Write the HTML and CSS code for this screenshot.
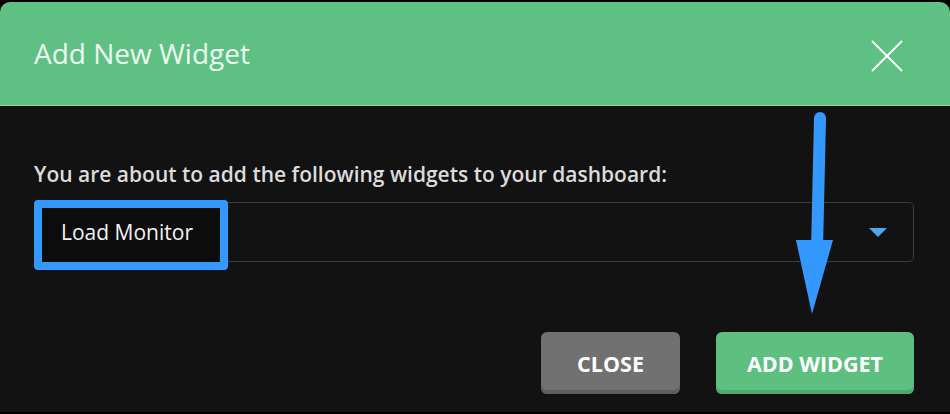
FILE: index.html
```html
<!DOCTYPE html>
<html lang="en">
<head>
    <meta charset="UTF-8">
    <meta name="viewport" content="width=device-width, initial-scale=1.0">
    <title>Add New Widget</title>
    <link rel="stylesheet" href="styles.css">
</head>
<body>
    <div class="modal">
        <div class="modal-header">
            <h2>Add New Widget</h2>
            <button class="close-x" aria-label="Close">
                <svg width="32" height="32" viewBox="0 0 32 32">
                    <path d="M1 1 L31 31 M31 1 L1 31" stroke="#ffffff" stroke-width="2" fill="none"/>
                </svg>
            </button>
        </div>
        <div class="modal-body">
            <p class="label">You are about to add the following widgets to your dashboard:</p>
            <div class="select">
                <span class="select-value">Load Monitor</span>
                <span class="caret"></span>
            </div>
            <div class="actions">
                <button class="btn btn-close">CLOSE</button>
                <button class="btn btn-add">ADD WIDGET</button>
            </div>
        </div>

        <!-- annotation overlays -->
        <div class="highlight"></div>
        <svg class="arrow" width="60" height="210" viewBox="0 0 60 210">
            <path d="M37 8 L34 140" stroke="#3399ff" stroke-width="12" stroke-linecap="round" fill="none"/>
            <polygon points="13,130 50,130 29,204" fill="#3399ff"/>
        </svg>
    </div>
</body>
</html>
```

FILE: styles.css
```css
body {
    margin: 0;
    padding: 0;
    background: #000;
    font-family: "Open Sans", Arial, sans-serif;
    height: 414px;
    overflow: hidden;
}
.modal {
    position: relative;
    margin-top: 2px;
    background: #121212;
    border-radius: 10px 10px 0 0;
    overflow: hidden;
    height: 410px;
}
.modal-header {
    display: flex;
    align-items: center;
    justify-content: space-between;
    height: 103px;
    padding: 0 47px 0 34px;
    background: #5fc084;
    border-bottom: 1px solid #8fd6a8;
}
.modal-header h2 {
    margin: 0 0 2px 0;
    font-size: 28px;
    font-weight: 400;
    color: #eefaf1;
}
.close-x {
    background: none;
    border: none;
    padding: 0;
    margin-top: 4px;
    cursor: pointer;
    display: flex;
}
.modal-body {
    padding: 54px 36px 0 34px;
}
.label {
    margin: 0 0 14px 0;
    font-size: 21px;
    font-weight: 600;
    color: #dcdcdc;
}
.select {
    display: flex;
    align-items: center;
    justify-content: space-between;
    height: 58px;
    border: 1px solid #3c3c3c;
    border-radius: 5px;
    padding: 0 26px 0 26px;
}
.select-value {
    position: relative;
    z-index: 2;
    font-size: 21px;
    color: #f2f2f2;
}
.caret {
    width: 0;
    height: 0;
    border-left: 9px solid transparent;
    border-right: 9px solid transparent;
    border-top: 9px solid #4da8f0;
}
.actions {
    display: flex;
    justify-content: flex-end;
    gap: 36px;
    margin-top: 70px;
}
.btn {
    height: 62px;
    border: none;
    border-radius: 6px;
    font-family: "Open Sans", Arial, sans-serif;
    font-size: 21.5px;
    font-weight: 700;
    color: #fff;
    cursor: pointer;
}
.btn-close {
    width: 139px;
    background: #717171;
    box-shadow: inset 0 -4px 0 #5e5e5e;
}
.btn-add {
    width: 198px;
    background: #5dbf80;
    box-shadow: inset 0 -4px 0 #4ea870;
}
.highlight {
    position: absolute;
    z-index: 1;
    left: 34px;
    top: 198px;
    width: 178px;
    height: 54px;
    border: 8px solid #3399ff;
    border-radius: 4px;
    background: #0c0c0c;
}
.arrow {
    position: absolute;
    z-index: 3;
    left: 783px;
    top: 108px;
}
```
